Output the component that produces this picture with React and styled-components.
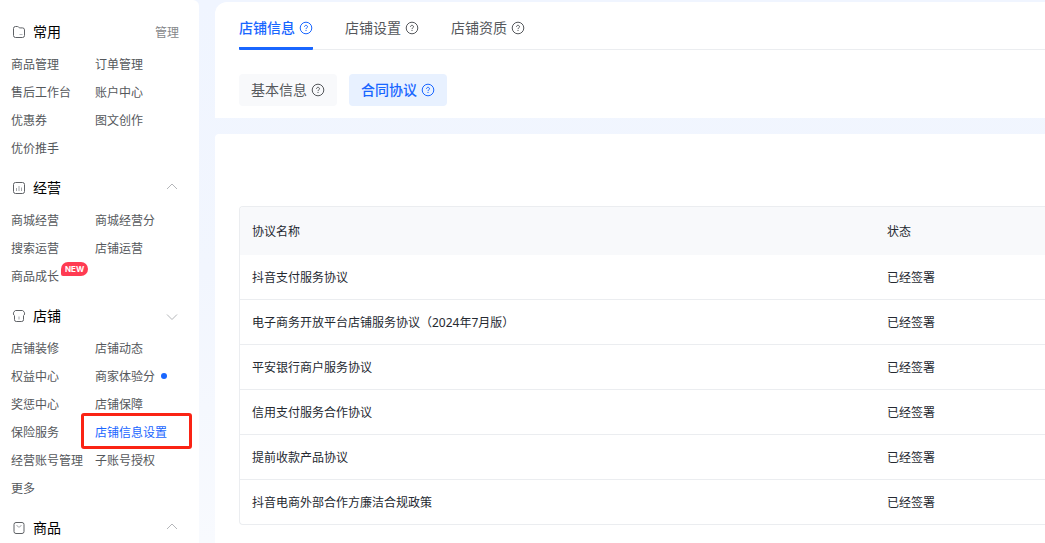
import { useState } from "react";
import styled, { createGlobalStyle, css } from "styled-components";

const menu = [
  {
    title: "常用",
    icon: "folder",
    action: "管理",
    items: ["商品管理", "订单管理", "售后工作台", "账户中心", "优惠券", "图文创作", "优价推手"],
  },
  {
    title: "经营",
    icon: "chart",
    arrow: "up",
    items: ["商城经营", "商城经营分", "搜索运营", "店铺运营", "商品成长"],
  },
  {
    title: "店铺",
    icon: "shop",
    arrow: "down",
    items: [
      "店铺装修", "店铺动态", "权益中心", "商家体验分", "奖惩中心", "店铺保障",
      "保险服务", "店铺信息设置", "经营账号管理", "子账号授权", "更多",
    ],
  },
  { title: "商品", icon: "bag", arrow: "up", items: [] },
];

const tabs = ["店铺信息", "店铺设置", "店铺资质"];
const subTabs = ["基本信息", "合同协议"];

const agreements = [
  "抖音支付服务协议",
  "电子商务开放平台店铺服务协议（2024年7月版）",
  "平安银行商户服务协议",
  "信用支付服务合作协议",
  "提前收款产品协议",
  "抖音电商外部合作方廉洁合规政策",
];

function HelpIcon() {
  return (
    <svg width="14" height="14" viewBox="0 0 14 14" fill="none" stroke="currentColor" aria-hidden="true">
      <circle cx="7" cy="7" r="5.8" />
      <path d="M5.500 5.700a1.500 1.400 0 1 1 2.300 1.200c-.5.300-.8.500-.8 1.100" />
      <path d="M7 8.900v1.100" />
    </svg>
  );
}

function MenuIcon({ name }) {
  return (
    <svg width="14" height="14" viewBox="0 0 14 14" fill="none" stroke="#5f6266" aria-hidden="true">
      {name === "folder" && (
        <>
          <path d="M1.500 3.500a2 2 0 0 1 2-2h1.800c.6 0 1 .2 1.400.6l.4.400c.3.300.6.400 1 .4h2.400a2 2 0 0 1 2 2v5.600a2 2 0 0 1-2 2h-7a2 2 0 0 1-2-2z" />
          <path d="M7.500 9.500h3" stroke="#b5b8bc" />
        </>
      )}
      {name === "chart" && (
        <>
          <rect x="1.500" y="1.500" width="11" height="11" rx="2" />
          <path d="M4.500 7v3M7 5v5M9.500 6.500v3.500" stroke="#a3a6aa" />
        </>
      )}
      {name === "shop" && (
        <>
          <path d="M3.500 1.500h7l1.500 1.200c.9 1.300.8 3.300-.5 4v4a1.800 1.800 0 0 1-1.800 1.800H4.300a1.800 1.800 0 0 1-1.800-1.800v-4c-1.300-.7-1.400-2.700-.5-4z" />
          <path d="M7 7.500v3" stroke="#a3a6aa" />
        </>
      )}
      {name === "bag" && (
        <>
          <rect x="2" y="1.500" width="10" height="11" rx="2" />
          <path d="M4.800 4c.3 1.300 1.100 2 2.200 2s1.900-.7 2.200-2" stroke="#a3a6aa" />
        </>
      )}
    </svg>
  );
}

function Arrow({ direction }) {
  return (
    <svg width="12" height="12" viewBox="0 0 12 12" fill="none" stroke="#b4b6b9" aria-hidden="true">
      <path d={direction === "up" ? "M1 7l5-5 5 5" : "M1 4.500l5 5 5-5"} />
    </svg>
  );
}

export default function App() {
  const [tab, setTab] = useState("店铺信息");
  const [subTab, setSubTab] = useState("合同协议");

  return (
    <>
      <GlobalStyle />
      <Page>
        <Sidebar>
          {menu.map(group => (
            <section key={group.title}>
              <GroupHeader>
                <MenuIcon name={group.icon} />
                <h2>{group.title}</h2>
                {group.action && <ManageButton>{group.action}</ManageButton>}
                {group.arrow && (
                  <ArrowButton aria-label={group.title}>
                    <Arrow direction={group.arrow} />
                  </ArrowButton>
                )}
              </GroupHeader>
              <MenuList>
                {group.items.map(item => (
                  <li key={item}>
                    <MenuLink href="#" $active={item === "店铺信息设置"}>
                      {item}
                      {item === "商品成长" && <NewBadge>NEW</NewBadge>}
                      {item === "商家体验分" && <Dot />}
                    </MenuLink>
                  </li>
                ))}
              </MenuList>
            </section>
          ))}
        </Sidebar>

        <Content>
          <HeaderCard>
            <TabBar>
              {tabs.map(name => (
                <Tab key={name} $active={name === tab} onClick={() => setTab(name)}>
                  <span>{name}</span>
                  <HelpIcon />
                </Tab>
              ))}
            </TabBar>
            <SubTabBar>
              {subTabs.map(name => (
                <SubTab key={name} $active={name === subTab} onClick={() => setSubTab(name)}>
                  <span>{name}</span>
                  <HelpIcon />
                </SubTab>
              ))}
            </SubTabBar>
          </HeaderCard>

          <TableCard>
            <Table>
              <thead>
                <tr>
                  <th>协议名称</th>
                  <StatusHead>状态</StatusHead>
                </tr>
              </thead>
              <tbody>
                {agreements.map(name => (
                  <tr key={name}>
                    <td>{name}</td>
                    <td>已经签署</td>
                  </tr>
                ))}
              </tbody>
            </Table>
          </TableCard>
        </Content>
      </Page>
    </>
  );
}

const GlobalStyle = createGlobalStyle`
  * {
    box-sizing: border-box;
  }
  body {
    margin: 0;
    font-family: "Noto Sans", "Noto Sans CJK SC", sans-serif;
    font-size: 12px;
    color: #252931;
  }
  button {
    padding: 0;
    border: none;
    background: none;
    font-family: inherit;
    cursor: pointer;
  }
  svg {
    flex-shrink: 0;
  }
`
const Page = styled.div`
  display: flex;
  gap: 16px;
  height: 100vh;
  overflow: hidden;
  background: linear-gradient(#f0f5ff, #f2f6fe 50%, #f8fafe);
`
const Sidebar = styled.nav`
  flex: 0 0 199px;
  display: flex;
  flex-direction: column;
  gap: 12px;
  padding: 18px 20px 0 11px;
  overflow: hidden;
  background-color: #fff;
  border-top-right-radius: 6px;
`
const GroupHeader = styled.header`
  display: flex;
  align-items: center;
  gap: 7px;
  height: 28px;
  margin-bottom: 4px;
  padding-left: 1px;
  h2 {
    flex-grow: 1;
    margin: 0;
    padding-bottom: 2px;
    font-size: 14px;
    font-weight: 400;
    color: #000;
  }
`
const ManageButton = styled.button`
  font-size: 12px;
  color: #85878a;
`
const ArrowButton = styled.button`
  display: flex;
  padding-right: 1px;
`
const MenuList = styled.ul`
  display: grid;
  grid-template-columns: 84px 1fr;
  margin: 0;
  padding: 0;
  list-style: none;
`
const MenuLink = styled.a`
  position: relative;
  display: inline-flex;
  align-items: center;
  height: 28px;
  white-space: nowrap;
  text-decoration: none;
  color: #55585c;
  ${(props) => props.$active && css`
    color: #1966ff;
    &::after {
      content: "";
      position: absolute;
      inset: -5px -25px -3px -14px;
      border: 3px solid #fa2314;
      border-radius: 3px;
    }
  `}
`
const NewBadge = styled.span`
  position: absolute;
  left: 50px;
  top: 0;
  padding: 0 4px;
  border-radius: 7px 7px 7px 2px;
  background-color: #ff3b52;
  color: #fff;
  font-family: Inter, sans-serif;
  font-size: 8px;
  font-weight: 700;
  line-height: 14px;
`
const Dot = styled.i`
  width: 6px;
  height: 6px;
  margin-left: 6px;
  border-radius: 50%;
  background-color: #1966ff;
`
const Content = styled.main`
  flex: 1;
  min-width: 0;
  display: flex;
  flex-direction: column;
  gap: 16px;
  padding-top: 2px;
`
const HeaderCard = styled.header`
  padding: 0 0 12px 24px;
  background-color: #fff;
  border-top-left-radius: 12px;
`
const TabBar = styled.div`
  display: flex;
  gap: 32px;
  height: 48px;
  border-bottom: 1px solid #ebedf0;
`
const Tab = styled.button`
  display: flex;
  align-items: center;
  gap: 4px;
  height: 48px;
  padding-top: 7px;
  border-bottom: 3px solid ${(props) => (props.$active ? "#1966ff" : "transparent")};
  border-radius: 1px;
  font-size: 14px;
  font-weight: ${(props) => (props.$active ? 500 : 400)};
  color: ${(props) => (props.$active ? "#1966ff" : "#55585c")};
  span {
    padding-bottom: 2px;
  }
`
const SubTabBar = styled.div`
  display: flex;
  gap: 12px;
  padding-top: 24px;
`
const SubTab = styled.button`
  display: flex;
  align-items: center;
  gap: 4px;
  height: 32px;
  padding: 0 12px;
  border-radius: 4px;
  font-size: 14px;
  font-weight: ${(props) => (props.$active ? 500 : 400)};
  background-color: ${(props) => (props.$active ? "#e8f1ff" : "#f8f9fb")};
  color: ${(props) => (props.$active ? "#1966ff" : "#55585c")};
  span {
    padding-bottom: 2px;
  }
`
const TableCard = styled.section`
  flex: 1;
  padding: 72px 0 0 24px;
  background-color: #fff;
  border-top-left-radius: 4px;
`
const Table = styled.table`
  width: 100%;
  table-layout: fixed;
  border: 1px solid #ebedf0;
  border-right: none;
  border-radius: 4px 0 0 4px;
  border-spacing: 0;
  overflow: hidden;
  th, td {
    padding: 0 12px;
    text-align: left;
    font-weight: 400;
  }
  th {
    height: 48px;
    background-color: #f8f9fb;
  }
  td {
    height: 45px;
    border-bottom: 1px solid #ebedf0;
  }
  tbody tr:last-child td {
    height: 44px;
    border-bottom: none;
  }
`
const StatusHead = styled.th`
  width: 170px;
`
